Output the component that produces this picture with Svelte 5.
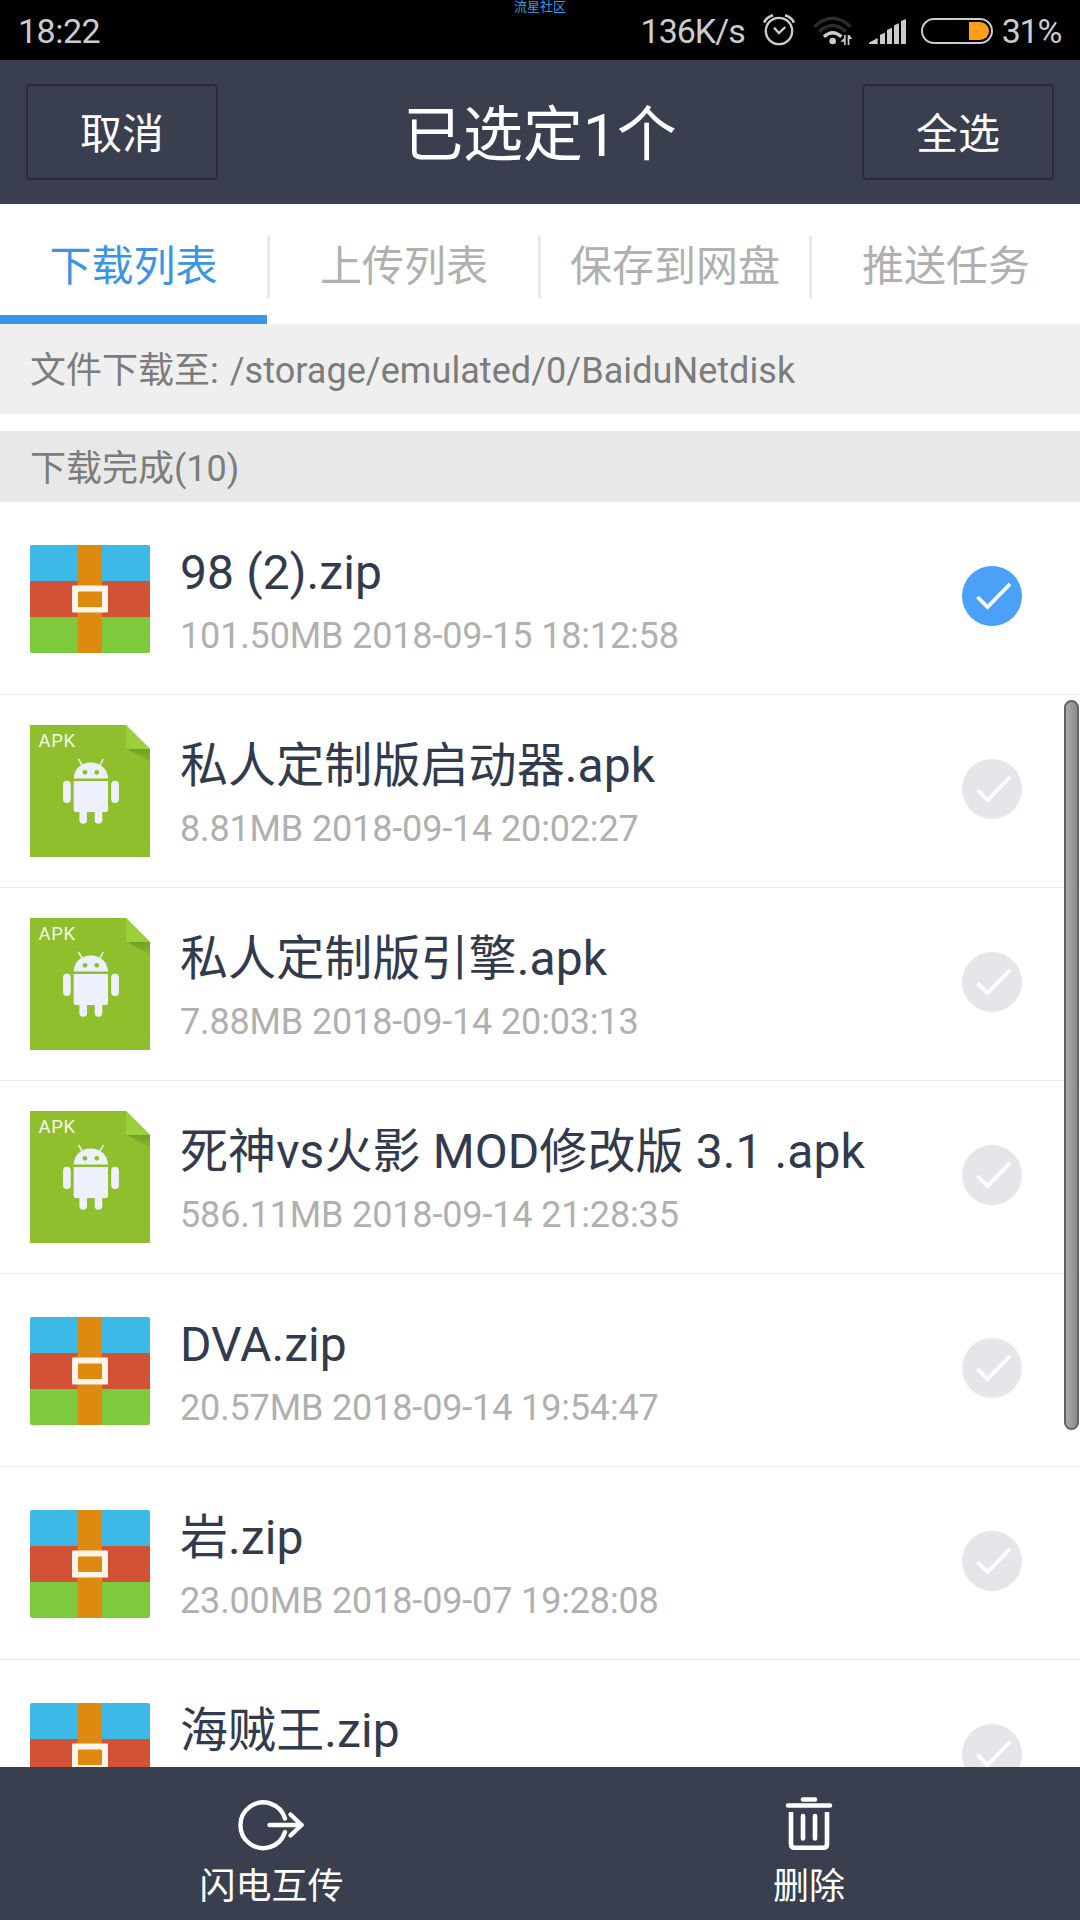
<script lang="ts">
	interface FileItem {
		name: string;
		meta: string;
		kind: 'zip' | 'apk';
	}

	const tabs = ['下载列表', '上传列表', '保存到网盘', '推送任务'];

	const files: FileItem[] = [
		{ name: '98 (2).zip', meta: '101.50MB 2018-09-15 18:12:58', kind: 'zip' },
		{ name: '私人定制版启动器.apk', meta: '8.81MB 2018-09-14 20:02:27', kind: 'apk' },
		{ name: '私人定制版引擎.apk', meta: '7.88MB 2018-09-14 20:03:13', kind: 'apk' },
		{ name: '死神vs火影 MOD修改版 3.1 .apk', meta: '586.11MB 2018-09-14 21:28:35', kind: 'apk' },
		{ name: 'DVA.zip', meta: '20.57MB 2018-09-14 19:54:47', kind: 'zip' },
		{ name: '岩.zip', meta: '23.00MB 2018-09-07 19:28:08', kind: 'zip' },
		{ name: '海贼王.zip', meta: '', kind: 'zip' }
	];

	let activeTab = $state(0);
	let selected = $state([0]);

	function toggle(i: number) {
		selected = selected.includes(i) ? selected.filter((n) => n !== i) : [...selected, i];
	}
</script>

{#snippet zipIcon()}
	<svg class="zip-icon" width="120" height="108" viewBox="0 0 120 108">
		<path d="M0 36V2Q0 0 2 0H118Q120 0 120 2V36Z" fill="#3db9e8" />
		<rect y="36" width="120" height="36" fill="#d35134" />
		<path d="M0 72H120V106Q120 108 118 108H2Q0 108 0 106Z" fill="#7dcb3c" />
		<rect x="47.5" width="24.5" height="108" fill="#de8910" />
		<rect x="42" y="40.5" width="36" height="27" rx="1" fill="#fff4e8" />
		<rect x="48" y="46.5" width="24" height="15.5" rx="1" fill="#de8910" />
	</svg>
{/snippet}

{#snippet apkIcon()}
	<svg width="120" height="132" viewBox="0 0 120 132">
		<defs>
			<linearGradient id="fold" x1="0" y1="0" x2="0" y2="1">
				<stop offset="0" stop-color="#759f25" />
				<stop offset="1" stop-color="#8ab72c" />
			</linearGradient>
		</defs>
		<path d="M0 0H96L120 24V132H0Z" fill="#90bf2e" />
		<path d="M97 24H120V37Z" fill="url(#fold)" />
		<path d="M96 0L120 24H96Z" fill="#9bcf3c" />
		<text class="apk-label" x="8.5" y="22.3" textLength="36.5">APK</text>
		<g fill="#eef0ff">
			<path d="M43.7 53.6C44 44 51 37.5 60.8 37.5S77.7 44 78 53.6Z" />
			<path d="M43.7 56H78V84.5Q78 87 75.5 87H46.2Q43.7 87 43.7 84.5Z" />
			<rect x="33" y="55.7" width="7.7" height="22.3" rx="3.8" />
			<rect x="81.2" y="55.7" width="7.7" height="22.3" rx="3.8" />
			<rect x="49.4" y="80" width="7.6" height="18.8" rx="3.8" />
			<rect x="64.7" y="80" width="7.6" height="18.8" rx="3.8" />
		</g>
		<path d="M48.5 34L52 40M73.3 34L70 40" stroke="#eef0ff" stroke-width="1.5" />
		<circle cx="55" cy="47.3" r="2.4" fill="#90bf2e" />
		<circle cx="66.8" cy="47.3" r="2.4" fill="#90bf2e" />
	</svg>
{/snippet}

<div class="screen">
	<div class="status-bar">
		<span class="clock">18:22</span>
		<span class="watermark">流星社区</span>
		<span class="speed">136K/s</span>
		<svg class="alarm" width="34" height="34" viewBox="486 38 102 102" fill="none" stroke="#ccc">
			<circle cx="537" cy="92" r="39.5" stroke-width="7" />
			<path d="M492 67Q500 50 519 45M582 67Q574 50 555 45" stroke-width="8" />
			<path d="M522 82L537 98L556 80" stroke-width="7" />
		</svg>
		<svg class="wifi" width="40" height="30" viewBox="638 45 120 90" fill="none">
			<path d="M642 77Q697 27 751 77" stroke="#2b2b2b" stroke-width="10" />
			<path d="M656 92Q697 55 737 92" stroke="#2b2b2b" stroke-width="10" />
			<path d="M671 107Q697 83 723 107" stroke="#ccc" stroke-width="10" />
			<circle cx="697" cy="120" r="10" fill="#ccc" />
			<path d="M731 102H736V132H731V122H720L731 112ZM742 102H747L756 114H747V132H742Z" fill="#ccc" />
		</svg>
		<svg class="signal" width="37" height="25" viewBox="807 54 111 75" fill="#ccc">
			<path
				d="M807 129V125L833 111V129ZM840 129V101L855 95V129ZM861 129V87L876 80V129ZM882 129V73L897 67V129ZM903 129V60L918 54V129Z"
			/>
		</svg>
		<svg class="battery" width="72" height="26" viewBox="0 0 72 26">
			<rect x="1" y="1" width="70" height="24" rx="12" fill="none" stroke="#ccc" stroke-width="2" />
			<path d="M48 4H59A9 9 0 0 1 59 22H48Z" fill="#ff9f1c" />
		</svg>
		<span class="percent">31%</span>
	</div>

	<header class="header">
		<button class="header-btn">取消</button>
		<h1>已选定{selected.length}个</h1>
		<button class="header-btn">全选</button>
	</header>

	<nav class="tabs">
		{#each tabs as tab, i}
			{#if i > 0}
				<span class="tab-divider"></span>
			{/if}
			<button class="tab" class:active={activeTab === i} onclick={() => (activeTab = i)}>
				{tab}
			</button>
		{/each}
	</nav>

	<div class="path-bar">文件下载至: <span class="path">/storage/emulated/0/BaiduNetdisk</span></div>
	<div class="section-title">下载完成(10)</div>

	<main class="list">
		{#each files as file, i}
			<div class="row">
				{#if file.kind === 'zip'}
					{@render zipIcon()}
				{:else}
					{@render apkIcon()}
				{/if}
				<div class="info">
					<div class="name">{file.name}</div>
					<div class="meta">{file.meta}</div>
				</div>
				<button
					class="check"
					class:checked={selected.includes(i)}
					aria-label="选择"
					onclick={() => toggle(i)}
				>
					<svg width="60" height="60" viewBox="0 0 60 60" fill="none" stroke="#fff">
						<path d="M15.5 31L25.5 41L48 18" stroke-width="3.8" />
					</svg>
				</button>
			</div>
		{/each}
		<div class="scrollbar"></div>
	</main>

	<footer class="footer">
		<button class="action">
			<svg width="70" height="54" viewBox="1.5 0 70 54" fill="none" stroke="#fff" stroke-width="4.4">
				<path d="M49.5 20.5A22.8 22.8 0 1 0 49.5 34" stroke-linecap="round" />
				<path d="M34 27H66" stroke-linecap="round" />
				<path d="M55 16.5L66 27L55 37.5" stroke-linecap="round" stroke-linejoin="round" />
			</svg>
			<span>闪电互传</span>
		</button>
		<button class="action">
			<svg width="70" height="54" viewBox="0 0 70 54" fill="none" stroke="#fff" stroke-width="4.6">
				<path d="M29 1.5H41M14 7.5H56" stroke-linecap="round" />
				<path d="M17 14V46Q17 49.7 20.5 49.7H49.5Q53 49.7 53 46V14" />
				<path d="M29 18V40.5M41 18V40.5" stroke-linecap="round" />
			</svg>
			<span>删除</span>
		</button>
	</footer>
</div>

<style>
	:global(body) {
		margin: 0;
		background: #fff;
	}

	.screen {
		display: flex;
		flex-direction: column;
		width: 1080px;
		height: 1920px;
		overflow: hidden;
		background: #fff;
		font-family: Roboto, 'Noto Sans CJK SC', sans-serif;
	}

	button {
		margin: 0;
		padding: 0;
		border: none;
		background: none;
		font-family: inherit;
		cursor: pointer;
	}

	svg {
		display: block;
		flex: none;
		overflow: visible;
	}

	.status-bar {
		position: relative;
		display: flex;
		align-items: center;
		flex: none;
		height: 60px;
		padding: 2px 19px 0 18px;
		box-sizing: border-box;
		background: #000;
		color: #ccc;
		font-size: 34px;
		line-height: 58px;
	}

	.clock {
		margin-right: auto;
		letter-spacing: -0.5px;
	}

	.speed {
		letter-spacing: -1px;
	}

	.percent {
		letter-spacing: -1.3px;
	}

	.watermark {
		position: absolute;
		top: 0;
		left: 514px;
		color: #2a9df4;
		font-size: 13px;
		line-height: 13px;
	}

	.alarm {
		margin: 0 17px 3px 17px;
	}

	.wifi {
		margin-right: 16px;
	}

	.signal {
		margin-right: 15px;
	}

	.battery {
		margin-right: 9px;
	}

	.header {
		display: flex;
		align-items: center;
		justify-content: space-between;
		flex: none;
		height: 144px;
		padding: 0 26px;
		box-sizing: border-box;
		background: #3a3f4f;
		color: #fff;
	}

	.header h1 {
		margin: 0;
		padding-top: 7px;
		font-size: 60px;
		font-weight: 400;
		line-height: 137px;
	}

	.header-btn {
		width: 192px;
		height: 96px;
		box-sizing: border-box;
		padding-bottom: 3px;
		border: 2px solid #292c36;
		border-radius: 4px;
		color: #fff;
		font-size: 42px;
	}

	.tabs {
		display: grid;
		grid-template-columns: 267px 3px 268px 3px 268px 3px 1fr;
		flex: none;
		height: 120px;
	}

	.tab {
		box-sizing: border-box;
		padding-top: 6px;
		border-bottom: 9px solid transparent;
		color: #b0b0b0;
		font-size: 42px;
		white-space: nowrap;
	}

	.tab.active {
		border-bottom-color: #3a95e4;
		color: #3a95e4;
	}

	.tab-divider {
		height: 62px;
		margin-top: 32px;
		background: #e8e8e8;
	}

	.path-bar {
		flex: none;
		height: 90px;
		margin-bottom: 17px;
		padding-left: 30px;
		background: #efefef;
		color: #7c7c7c;
		font-size: 36px;
		line-height: 94px;
	}

	.path {
		margin-left: 2px;
		letter-spacing: 0.05px;
	}

	.section-title {
		flex: none;
		height: 71px;
		padding-left: 30px;
		background: #e8e8e8;
		color: #7c7c7c;
		font-size: 36px;
		line-height: 77px;
	}

	.list {
		position: relative;
		flex: 1;
		min-height: 0;
		overflow: hidden;
	}

	.row {
		display: flex;
		align-items: center;
		height: 193px;
		padding: 0 58.5px 0 30px;
		box-sizing: border-box;
		border-bottom: 1px solid #ececec;
	}

	.zip-icon {
		margin-top: 2px;
	}

	.apk-label {
		fill: #f3f8e8;
		font-size: 18.5px;
	}

	.info {
		flex: 1;
		height: 100%;
		margin-left: 30px;
		padding-top: 36px;
		box-sizing: border-box;
	}

	.name {
		color: #323b4d;
		font-size: 48px;
		letter-spacing: 0.1px;
		line-height: 70px;
	}

	.meta {
		color: #b0b0b0;
		font-size: 36px;
		letter-spacing: -0.15px;
		line-height: 57px;
	}

	.check {
		width: 60px;
		height: 60px;
		margin-bottom: 4px;
		border-radius: 50%;
		background: #e5e6ea;
	}

	.check.checked {
		background: #4ba1f7;
	}

	.scrollbar {
		position: absolute;
		top: 198px;
		right: 1px;
		width: 15px;
		height: 730px;
		box-sizing: border-box;
		border: 2px solid #626262;
		border-radius: 8px;
		background: linear-gradient(to right, #aaa, #8c8c8c);
	}

	.footer {
		display: grid;
		grid-template-columns: 543px 532px;
		flex: none;
		height: 153px;
		background: #3a3f4f;
	}

	.action {
		display: flex;
		flex-direction: column;
		align-items: center;
		padding-top: 31px;
		color: #fff;
		font-size: 36px;
		line-height: 70px;
	}
</style>
